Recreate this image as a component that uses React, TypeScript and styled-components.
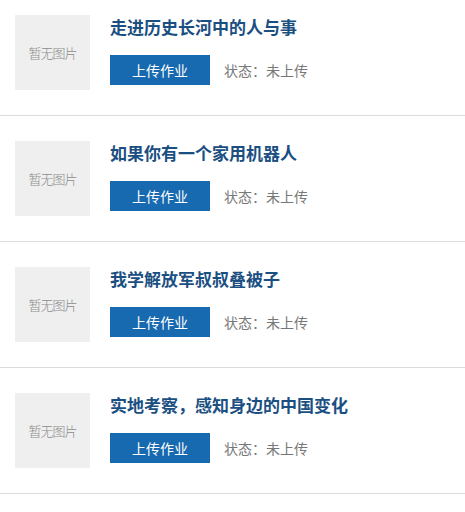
import React from "react";
import styled, { createGlobalStyle } from "styled-components";

const GlobalStyle = createGlobalStyle`
  html, body {
    margin: 0;
    padding: 0;
    background: #ffffff;
  }
  body {
    font-family: "Noto Sans CJK SC", "Microsoft YaHei", sans-serif;
  }
`;

const List = styled.ul`
  list-style: none;
  margin: 0;
  padding: 0;
  width: 465px;
`;

const Item = styled.li`
  display: flex;
  align-items: flex-start;
  gap: 20px;
  padding: 25px 15px 25px 15px;
  border-bottom: 1px solid #dcdcdc;

  &:first-child {
    padding-top: 15px;
  }
`;

const Thumb = styled.div`
  flex: 0 0 75px;
  width: 75px;
  height: 75px;
  background: #efefef;
  display: flex;
  align-items: center;
  justify-content: center;
  color: #8c8c8c;
  font-size: 13px;
  font-weight: 300;
  letter-spacing: -1px;
`;

const Info = styled.div`
  display: flex;
  flex-direction: column;
  min-width: 0;
`;

const Title = styled.h3`
  margin: 0;
  font-size: 17px;
  line-height: 24px;
  font-weight: 700;
  color: #1b4f82;
  white-space: nowrap;
`;

const Actions = styled.div`
  display: flex;
  align-items: center;
  gap: 14px;
  margin-top: 16px;
`;

const UploadButton = styled.button`
  width: 100px;
  height: 30px;
  border: none;
  padding: 0;
  background: #1769b0;
  color: #ffffff;
  font-family: inherit;
  font-size: 14px;
  line-height: 30px;
  cursor: pointer;
`;

const Status = styled.span`
  font-size: 14px;
  color: #777777;
`;

const items = [
  "走进历史长河中的人与事",
  "如果你有一个家用机器人",
  "我学解放军叔叔叠被子",
  "实地考察，感知身边的中国变化",
];

export default function App() {
  return (
    <>
      <GlobalStyle />
      <List>
        {items.map((t) => (
          <Item key={t}>
            <Thumb>暂无图片</Thumb>
            <Info>
              <Title>{t}</Title>
              <Actions>
                <UploadButton>上传作业</UploadButton>
                <Status>状态：未上传</Status>
              </Actions>
            </Info>
          </Item>
        ))}
      </List>
    </>
  );
}
